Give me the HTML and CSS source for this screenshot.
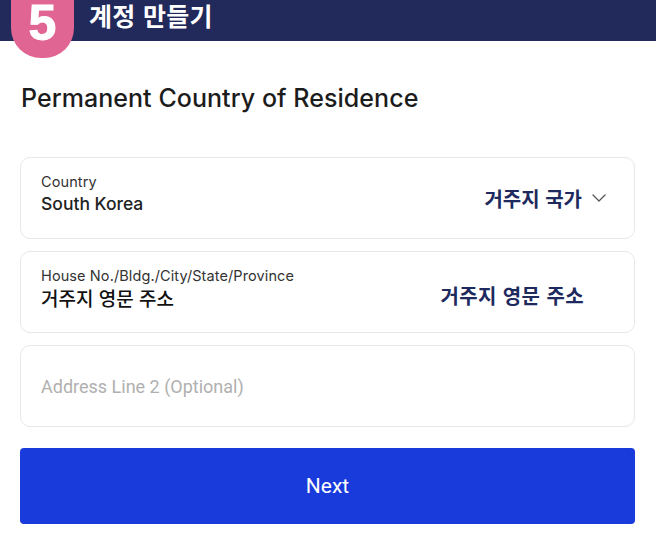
FILE: index.html
```html
<!DOCTYPE html>
<html lang="ko">
<head>
<meta charset="utf-8">
<link rel="stylesheet" href="styles.css">
</head>
<body>
<header class="topbar">
  <div class="badge"><span class="badge-num">5</span></div>
  <h1 class="topbar-title">계정 만들기</h1>
</header>
<main class="content">
  <h2 class="section-title">Permanent Country of Residence</h2>
  <div class="field">
    <div class="field-main">
      <div class="field-label">Country</div>
      <div class="field-value">South Korea</div>
    </div>
    <div class="field-side field-side-select">
      <span class="side-text">거주지 국가</span>
      <svg class="chevron" width="14" height="8" viewBox="0 0 14 8" aria-hidden="true">
        <path d="M1 1 L7 7 L13 1" fill="none" stroke="#555" stroke-width="1.3" stroke-linecap="round" stroke-linejoin="round"/>
      </svg>
    </div>
  </div>
  <div class="field">
    <div class="field-main">
      <div class="field-label">House No./Bldg./City/State/Province</div>
      <div class="field-value field-value-ko">거주지 영문 주소</div>
    </div>
    <div class="field-side field-side-text">
      <span class="side-text side-text-lg">거주지 영문 주소</span>
    </div>
  </div>
  <div class="field field-empty">
    <div class="placeholder">Address Line 2 (Optional)</div>
  </div>
  <button class="next-btn" type="button">Next</button>
</main>
</body>
</html>
```

FILE: styles.css
```css
html, body {
  margin: 0;
  padding: 0;
  background: #ffffff;
}
body {
  font-family: "Inter", "Noto Sans CJK KR", sans-serif;
  color: #1c1c1c;
}
.topbar {
  position: relative;
  height: 41px;
  background: #222a5c;
  display: flex;
  align-items: flex-start;
  padding-left: 89px;
  box-sizing: border-box;
}
.badge {
  position: absolute;
  left: 11px;
  top: 0;
  width: 63px;
  height: 58px;
  background: #e06592;
  border-radius: 0 0 30px 30px;
  display: flex;
  justify-content: center;
}
.badge-num {
  font-family: "Liberation Sans", Arial, sans-serif;
  font-weight: 700;
  font-size: 50px;
  line-height: 46px;
  color: #ffffff;
  margin-top: 0;
  -webkit-text-stroke: 1px #ffffff;
}
.topbar-title {
  margin: 0;
  font-family: "Noto Sans CJK KR", sans-serif;
  font-weight: 700;
  font-size: 25px;
  line-height: 31px;
  color: #ffffff;
  letter-spacing: 0.3px;
}
.content {
  padding: 0 21px 0 20px;
  display: flex;
  flex-direction: column;
}
.section-title {
  margin: 42px 0 0 1px;
  font-family: "Inter", sans-serif;
  font-weight: 500;
  font-size: 25px;
  line-height: 30px;
  color: #1c1c1c;
  letter-spacing: 0.05px;
}
.field {
  margin-top: 44px;
  height: 82px;
  box-sizing: border-box;
  border: 1px solid #e7e7e7;
  border-radius: 10px;
  display: flex;
  align-items: center;
  justify-content: space-between;
  padding: 0 28px 0 20px;
}
.field + .field {
  margin-top: 12px;
}
.field-main {
  display: flex;
  flex-direction: column;
  margin-top: -9px;
}
.field-label {
  font-family: "Inter", sans-serif;
  font-size: 14.5px;
  line-height: 17px;
  color: #333333;
  letter-spacing: 0.1px;
}
.field-value {
  font-family: "Inter", sans-serif;
  font-weight: 500;
  font-size: 17.5px;
  line-height: 22px;
  color: #222222;
  margin-top: 3px;
}
.field-value-ko {
  font-family: "Noto Sans CJK KR", sans-serif;
  font-weight: 500;
  font-size: 19px;
  color: #111111;
}
.field-side {
  display: flex;
  align-items: center;
  gap: 10px;
}
.field-side-text {
  margin-right: 22px;
  margin-top: 6px;
}
.side-text {
  font-family: "Noto Sans CJK KR", sans-serif;
  font-weight: 700;
  font-size: 20px;
  color: #1e2a5e;
}
.side-text-lg {
  font-size: 20px;
  letter-spacing: 0.4px;
}
.chevron {
  display: block;
}
.field-empty {
  justify-content: flex-start;
}
.placeholder {
  font-family: "Roboto", sans-serif;
  font-size: 18px;
  color: #b0b0b0;
}
.next-btn {
  margin-top: 21px;
  height: 76px;
  border: none;
  border-radius: 4px;
  background: #1a3bdc;
  color: #ffffff;
  font-family: "Roboto", sans-serif;
  font-size: 21px;
  padding: 0;
  cursor: pointer;
}
```
